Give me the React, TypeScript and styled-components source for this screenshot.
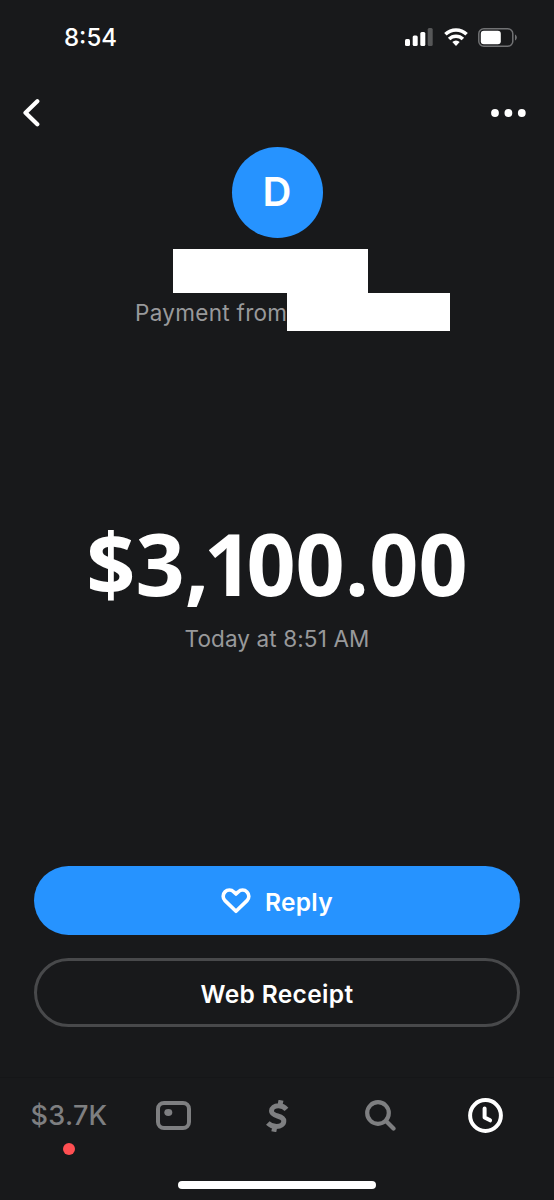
import React from 'react';
import styled, { createGlobalStyle } from 'styled-components';

const GlobalStyle = createGlobalStyle`
  * { box-sizing: border-box; }
  body { margin: 0; background: #18191b; }
`;

const Screen = styled.main`
  width: 554px;
  height: 1200px;
  display: flex;
  flex-direction: column;
  background: #18191b;
  color: #fff;
  font-family: Inter, "Liberation Sans", sans-serif;
  overflow: hidden;
`;

const StatusBar = styled.header`
  height: 74px;
  padding: 0 37px 0 64px;
  display: flex;
  align-items: center;
  justify-content: space-between;
`;

const Time = styled.time`
  font-size: 24px;
  font-weight: 500;
`;

const StatusIcons = styled.div`
  display: flex;
  align-items: center;
  gap: 10px;
`;

const NavBar = styled.nav`
  height: 73px;
  padding: 4px 28px 0 23px;
  display: flex;
  align-items: center;
  justify-content: space-between;
`;

const IconButton = styled.button`
  display: flex;
  padding: 0;
  border: 0;
  background: none;
  color: inherit;
`;

const Profile = styled.section`
  height: 185px;
  display: flex;
  flex-direction: column;
  align-items: center;
`;

const Avatar = styled.div`
  flex: none;
  width: 91px;
  height: 91px;
  border-radius: 50%;
  background: #2693ff;
  display: flex;
  justify-content: center;
  font-size: 40px;
  line-height: 89px;
  font-weight: 600;
`;

const Redaction = styled.span<{ $width: number; $height: number }>`
  display: block;
  flex: none;
  width: ${p => p.$width}px;
  height: ${p => p.$height}px;
  background: #fff;
`;

const Name = styled.div`
  margin: 11px 14px 0 0;
`;

const Source = styled.div`
  align-self: flex-start;
  margin-left: 135px;
  display: flex;
  align-items: center;
`;

const Caption = styled.span<{ $width?: number }>`
  width: ${p => (p.$width ? `${p.$width}px` : 'auto')};
  font-size: 22.5px;
  font-weight: 400;
  letter-spacing: ${p => (p.$width ? 0.3 : 0.12)}px;
  white-space: nowrap;
  color: #98999b;
`;

const Payment = styled.section`
  flex: 1;
  padding-top: 181px;
  display: flex;
  flex-direction: column;
  align-items: center;
`;

const Amount = styled.h1`
  margin: 0 0 12px;
  font-family: "Open Sans", "Noto Sans", sans-serif;
  font-size: 86px;
  line-height: 100px;
  font-weight: 700;
  white-space: nowrap;
`;

const Kern = styled.span<{ $by: number }>`
  letter-spacing: ${p => p.$by}px;
`;

const Actions = styled.section`
  height: 211px;
  padding: 0 34px;
  display: flex;
  flex-direction: column;
  gap: 23px;
`;

const Button = styled.button<{ $primary?: boolean }>`
  height: 69px;
  width: 100%;
  padding: 0;
  border: ${p => (p.$primary ? '0' : '3px solid #48494b')};
  border-radius: 35px;
  background: ${p => (p.$primary ? '#2693ff' : 'transparent')};
  display: flex;
  align-items: center;
  justify-content: center;
  gap: 14px;
  color: #fff;
  font: 600 24.5px Inter, "Liberation Sans", sans-serif;
  letter-spacing: 0.35px;
`;

const ButtonLabel = styled.span`
  padding-top: 3px;
`;

const TabBar = styled.footer`
  height: 123px;
  padding: 20px 17px 0;
  display: grid;
  grid-template-columns: repeat(5, 104px);
  align-items: start;
  border-top: 1px solid #151618;
  position: relative;
  color: #7e7f81;
`;

const Balance = styled.div`
  padding-top: 1px;
  display: flex;
  flex-direction: column;
  align-items: center;
  gap: 10px;
  font-size: 27px;
  line-height: 34px;
  font-weight: 500;
  letter-spacing: 0.3px;
`;

const Dot = styled.i`
  width: 12px;
  height: 12px;
  border-radius: 50%;
  background: #ff4f52;
`;

const Tab = styled.div<{ $active?: boolean }>`
  height: 35px;
  display: flex;
  align-items: center;
  justify-content: center;
  color: ${p => (p.$active ? '#fff' : 'inherit')};
`;

const HomeIndicator = styled.div`
  position: absolute;
  left: 178px;
  bottom: 11px;
  width: 198px;
  height: 8px;
  border-radius: 4px;
  background: #fff;
`;

export default function App() {
  return (
    <Screen>
      <GlobalStyle />
      <StatusBar>
        <Time>8:54</Time>
        <StatusIcons>
          <svg width="29" height="18" viewBox="0 0 29 18" fill="#fff">
            <rect x="0" y="11" width="5" height="7" rx="1.5" />
            <rect x="7.7" y="7.5" width="5" height="10.5" rx="1.5" />
            <rect x="15.3" y="4" width="5" height="14" rx="1.5" />
            <rect x="22.7" y="0" width="5" height="18" rx="1.5" opacity=".27" />
          </svg>
          <svg width="24" height="18" viewBox="0 0 24 18" fill="none" stroke="#fff" strokeWidth="3.5">
            <path d="M1.4 6.3a15 15 0 0 1 21.2 0" />
            <path d="M5.1 11a9.8 9.8 0 0 1 13.8 0" />
            <path d="M8.3 14.1a5.2 5.2 0 0 1 7.4 0L12 17.9z" fill="#fff" stroke="none" />
          </svg>
          <svg width="39" height="19" viewBox="0 0 39 19">
            <rect x=".8" y=".8" width="34" height="17.4" rx="5" fill="none" stroke="#717274" strokeWidth="1.5" />
            <rect x="2.8" y="2.8" width="20" height="13.4" rx="3" fill="#fff" />
            <path d="M37 6.5c2.4 1 2.4 5 0 6z" fill="#717274" />
          </svg>
        </StatusIcons>
      </StatusBar>
      <NavBar>
        <IconButton aria-label="Back">
          <svg width="18" height="28" viewBox="0 0 18 28" fill="none" stroke="#fff" strokeWidth="4.2" strokeLinecap="round" strokeLinejoin="round">
            <path d="M14.3 2.3 2.5 13.7l11.8 11.6" />
          </svg>
        </IconButton>
        <IconButton aria-label="More">
          <svg width="35" height="8" viewBox="0 0 35 8" fill="#fff">
            <circle cx="4" cy="4" r="3.9" />
            <circle cx="17.4" cy="4" r="3.9" />
            <circle cx="30.8" cy="4" r="3.9" />
          </svg>
        </IconButton>
      </NavBar>
      <Profile>
        <Avatar>D</Avatar>
        <Name><Redaction $width={195} $height={44} /></Name>
        <Source>
          <Caption $width={152}>Payment from</Caption>
          <Redaction $width={163} $height={38} />
        </Source>
      </Profile>
      <Payment>
        <Amount>
          $3<Kern $by={-5.5}>,</Kern><Kern $by={-6.5}>1</Kern>00.00
        </Amount>
        <Caption>Today at 8:51 AM</Caption>
      </Payment>
      <Actions>
        <Button $primary>
          <svg width="30" height="26" viewBox="0 0 30 26" fill="none" stroke="#fff" strokeWidth="3.6" strokeLinejoin="round">
            <path d="M15 23.3 4 12.6a6.1 6.1 0 0 1 0-8.7 6.2 6.2 0 0 1 8.8 0L15 6l2.2-2.1a6.2 6.2 0 0 1 8.8 0 6.1 6.1 0 0 1 0 8.7z" />
          </svg>
          <ButtonLabel>Reply</ButtonLabel>
        </Button>
        <Button><ButtonLabel>Web Receipt</ButtonLabel></Button>
      </Actions>
      <TabBar>
        <Balance>$3.7K<Dot /></Balance>
        <Tab>
          <svg width="35" height="29" viewBox="0 0 35 29" fill="none" stroke="currentColor" strokeWidth="4">
            <rect x="2" y="2" width="31" height="25" rx="6" />
            <ellipse cx="12.3" cy="11.5" rx="4" ry="3.4" fill="currentColor" stroke="none" />
          </svg>
        </Tab>
        <Tab>
          <svg width="23" height="32" viewBox="0 0 23 32" fill="none" stroke="currentColor" strokeWidth="5">
            <path d="M20.5 9.3C18.5 7 15.5 5.7 12.5 5.7 8.5 5.7 5.5 7.8 5.5 11c0 6.500 12.3 3.5 12.3 10 0 3.5-3.3 5.5-7.3 5.5-3.5 0-6.5-1.3-8.7-3.5M15 .3l-1.2 6M9 25.7l-1.2 6" />
          </svg>
        </Tab>
        <Tab>
          <svg width="32" height="31" viewBox="0 0 32 31" fill="none" stroke="currentColor" strokeWidth="4.2">
            <circle cx="13" cy="13" r="10.8" />
            <path d="m21 21 7.5 7.5" strokeLinecap="round" />
          </svg>
        </Tab>
        <Tab $active>
          <svg width="35" height="35" viewBox="0 0 35 35" fill="none" stroke="currentColor" strokeWidth="4">
            <circle cx="17.5" cy="17.5" r="15.4" />
            <path d="M16.6 10.5v9l5.5 2.8" strokeLinecap="round" strokeLinejoin="round" />
          </svg>
        </Tab>
        <HomeIndicator />
      </TabBar>
    </Screen>
  );
}
